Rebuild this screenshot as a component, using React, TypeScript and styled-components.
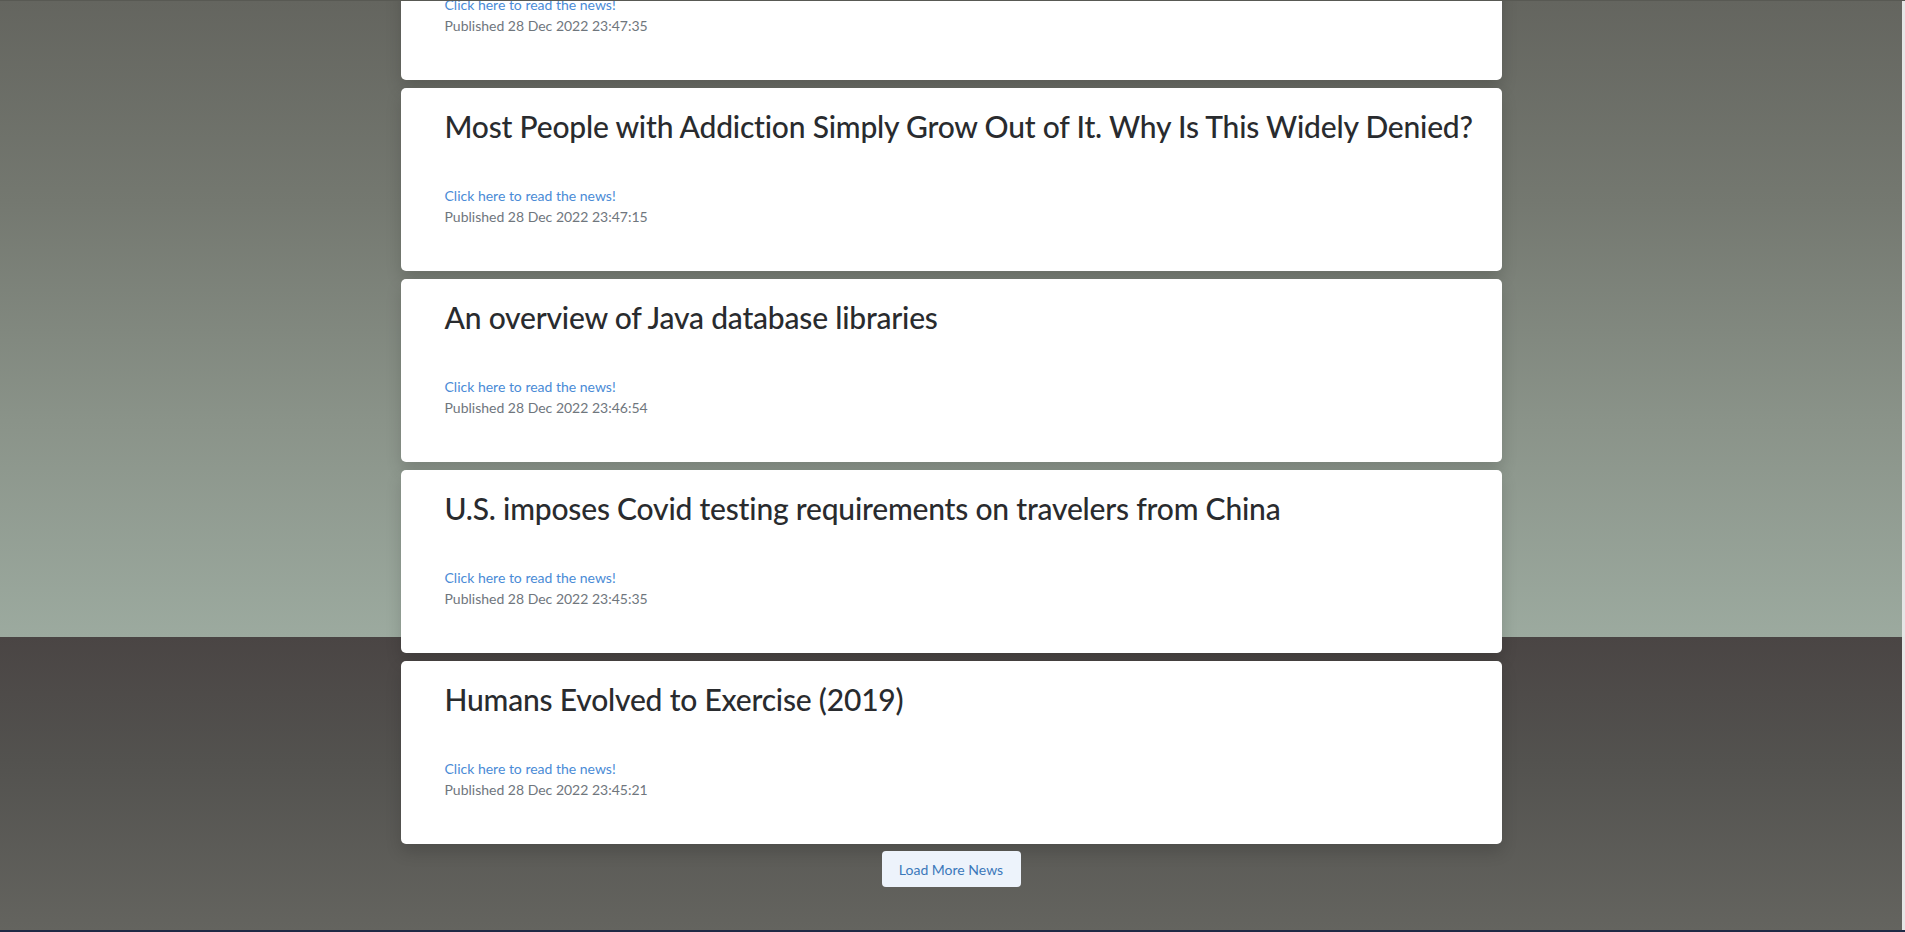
import React from "react";
import styled, {createGlobalStyle} from "styled-components";

interface NewsItem {
    id: number;
    title: string;
    published: string;
}

const news: NewsItem[] = [
    {id: 1, title: "Show HN: A tiny tool for reading the news", published: "28 Dec 2022 23:47:35"},
    {id: 2, title: "Most People with Addiction Simply Grow Out of It. Why Is This Widely Denied?", published: "28 Dec 2022 23:47:15"},
    {id: 3, title: "An overview of Java database libraries", published: "28 Dec 2022 23:46:54"},
    {id: 4, title: "U.S. imposes Covid testing requirements on travelers from China", published: "28 Dec 2022 23:45:35"},
    {id: 5, title: "Humans Evolved to Exercise (2019)", published: "28 Dec 2022 23:45:21"},
];

const GlobalStyle = createGlobalStyle`
  html, body {
    margin: 0;
    padding: 0;
    overflow: hidden;
  }

  body {
    font-family: Lato, "Open Sans", sans-serif;
  }
`;

const NewsCard: React.FC<NewsItem> = ({title, published}) => (
    <Card>
        <CardTitle>{title}</CardTitle>
        <CardLink href="#">Click here to read the news!</CardLink>
        <CardDate>Published {published}</CardDate>
    </Card>
);

export default function App() {
    return (
        <>
            <GlobalStyle/>
            <Window>
                <Viewport>
                    {/* page is scrolled: the first card sits partly above the fold */}
                    <NewsList>
                        {news.map(item => <NewsCard key={item.id} {...item}/>)}
                        <LoadMore type="button">Load More News</LoadMore>
                    </NewsList>
                </Viewport>
                <ScrollEdge/>
            </Window>
            <BottomEdge/>
        </>
    );
}

const Window = styled.div`
  display: flex;
  height: 930px;
  width: 1905px;
  border-top: 1px solid #585953;
  box-sizing: border-box;
  overflow: hidden;
`;

const Viewport = styled.main`
  flex: 1;
  overflow: hidden;
  background: linear-gradient(to bottom,
  #64655f 0,
  #747870 200px,
  #8a9389 420px,
  #9caa9f 636px,
  #4a4544 636px,
  #53524f 760px,
  #64645f 929px);
`;

const ScrollEdge = styled.div`
  width: 3px;
  background: #e6e6e6;
`;

const BottomEdge = styled.div`
  height: 2px;
  width: 1905px;
  background: #1f2a45;
`;

const NewsList = styled.div`
  display: flex;
  flex-direction: column;
  align-items: center;
  gap: 8px;
  margin-top: -104px;
`;

const Card = styled.article`
  width: 1101px;
  height: 183px;
  box-sizing: border-box;
  padding: 20px 44px 0;
  background: #fff;
  border-radius: 5px;
  box-shadow: 0 0.5rem 1rem rgba(0, 0, 0, 0.15);
  display: flex;
  flex-direction: column;
  align-items: flex-start;
`;

const CardTitle = styled.h2`
  margin: 0 0 41px;
  font-size: 30px;
  font-weight: 500;
  letter-spacing: -0.2px;
  line-height: 36px;
  color: #292b2e;
  white-space: nowrap;
`;

const CardLink = styled.a`
  font-size: 14px;
  line-height: 21px;
  color: #4a8bd6;
  text-decoration: none;
`;

const CardDate = styled.span`
  font-size: 14px;
  line-height: 21px;
  color: #6f767d;
`;

const LoadMore = styled.button`
  margin-top: -1px;
  width: 139px;
  height: 36px;
  border: none;
  border-radius: 4px;
  background: #edf3fb;
  color: #3b78ba;
  font-family: Lato, "Open Sans", sans-serif;
  font-size: 14px;
  line-height: 21px;
  cursor: pointer;
`;
